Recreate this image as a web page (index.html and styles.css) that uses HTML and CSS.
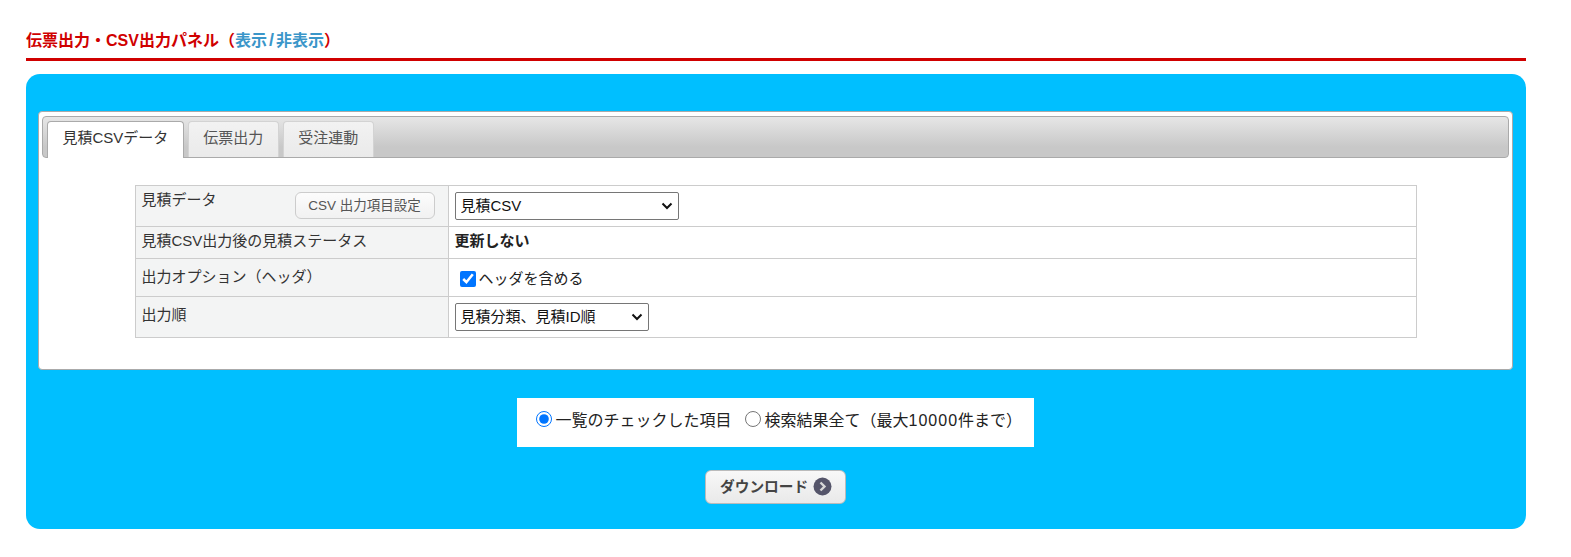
FILE: index.html
```html
<!DOCTYPE html>
<html lang="ja">
<head>
<meta charset="utf-8">
<title>伝票出力・CSV出力パネル</title>
<link rel="stylesheet" href="styles.css">
</head>
<body>
<main class="page">
  <h2 class="title">伝票出力・CSV出力パネル（<a class="toggle" href="#">表示<span class="slash">/</span>非表示</a>）</h2>
  <section class="panel">
    <div class="tabs">
      <ul class="tabbar">
        <li class="tab active">見積CSVデータ</li>
        <li class="tab">伝票出力</li>
        <li class="tab">受注連動</li>
      </ul>
      <div class="tabbody">
        <table class="form">
          <tr class="r1">
            <th><div class="thflex"><span>見積データ</span><button class="setbtn" type="button">CSV 出力項目設定</button></div></th>
            <td><select class="sel sel-a"><option>見積CSV</option></select></td>
          </tr>
          <tr class="r2">
            <th>見積CSV出力後の見積ステータス</th>
            <td><strong>更新しない</strong></td>
          </tr>
          <tr class="r3">
            <th>出力オプション（ヘッダ）</th>
            <td><label class="chk"><input type="checkbox" checked>ヘッダを含める</label></td>
          </tr>
          <tr class="r4">
            <th>出力順</th>
            <td><select class="sel sel-b"><option>見積分類、見積ID順</option></select></td>
          </tr>
        </table>
      </div>
    </div>
    <div class="scope">
      <label class="rad"><input type="radio" name="scope" checked>一覧のチェックした項目</label>
      <label class="rad"><input type="radio" name="scope"><span>検索結果全て（最大<span class="num">10000</span>件まで）</span></label>
    </div>
    <div class="actions">
      <button class="dl" type="button">ダウンロード<svg class="dl-icon" width="19" height="19" viewBox="0 0 19 19"><circle cx="9.5" cy="9.5" r="9" fill="#55556a"/><path d="M7.5 5.5l4 4-4 4" fill="none" stroke="#d8d8d8" stroke-width="2.4"/></svg></button>
    </div>
  </section>
</main>
</body>
</html>
```
FILE: styles.css
```css
* { box-sizing: border-box; }
html, body { margin: 0; padding: 0; background: #fff; }
body {
  font-family: "Liberation Sans", "Noto Sans CJK JP", sans-serif;
  font-size: 15px;
  color: #333;
}
.page { width: 1500px; margin-left: 26px; padding-top: 30px; }
.title {
  margin: 0;
  height: 31px;
  padding-top: 1px;
  font-size: 16px;
  line-height: 20px;
  font-weight: bold;
  color: #d00000;
  border-bottom: 3px solid #d00000;
}
.toggle { color: #3a96c9; text-decoration: none; }
.slash { padding: 0 2px; font-size: 18px; line-height: 16px; }
.panel {
  margin-top: 13px;
  height: 455px;
  background: #00bfff;
  border-radius: 14px;
  padding: 37px 13px 0 12px;
}
.tabs {
  height: 259px;
  background: #fff;
  border: 1px solid #aaa;
  border-radius: 4px;
  padding: 4px 3px 0;
}
.tabbar {
  list-style: none;
  margin: 0;
  padding: 4px 0 0 4px;
  height: 42px;
  display: flex;
  gap: 4px;
  align-items: flex-end;
  border: 1px solid #aaa;
  border-radius: 4px;
  background: linear-gradient(#e6e6e6, #c8c8c8 75%);
}
.tab {
  height: 36px;
  padding: 0 14.5px;
  line-height: 32px;
  color: #555;
  background: linear-gradient(#f2f2f2, #eaeaea);
  border: 1px solid #d3d3d3;
  border-bottom: 0;
  border-radius: 4px 4px 0 0;
}
.tab.active {
  height: 37px;
  margin-bottom: -1px;
  background: #fff;
  color: #333;
  border-color: #aaa;
}
.tabbody { padding: 27px 0 0; display: flex; justify-content: center; }
.form {
  width: 1282px;
  border-collapse: collapse;
  table-layout: fixed;
}
.form th, .form td {
  border: 1px solid #ccc;
  padding: 4px 6px;
  vertical-align: top;
  text-align: left;
  font-weight: normal;
  line-height: 20px;
}
.form th { width: 313px; background: #f3f4f4; }
.form td { color: #222; }
.form td strong { font-weight: bold; }
.form .r1 td { padding-top: 6px; }
.form .r2 th, .form .r2 td { padding-top: 4px; }
.form .r3 th { padding-top: 8px; }
.form .r4 th { padding-top: 8px; }
.form .r4 td { padding-top: 6px; }
.r1 { height: 41px; }
.r2 { height: 32px; }
.r3 { height: 38px; }
.r4 { height: 41px; }
.thflex { display: flex; justify-content: space-between; align-items: flex-start; padding-right: 7px; }
.setbtn {
  width: 140px;
  height: 27px;
  margin-top: 2px;
  padding: 0;
  font: inherit;
  font-size: 13.5px;
  color: #555;
  background: linear-gradient(#fcfcfc, #f1f1f1);
  border: 1px solid #ccc;
  border-radius: 6px;
}
.sel {
  display: block;
  height: 28px;
  font: inherit;
  color: #111;
  background: #fff url("data:image/svg+xml,%3Csvg xmlns='http://www.w3.org/2000/svg' width='12' height='8'%3E%3Cpath d='M1.5 1.5L6 6l4.5-4.5' fill='none' stroke='%23111' stroke-width='2'/%3E%3C/svg%3E") no-repeat right 5px center;
  border: 1px solid #767676;
  border-radius: 2px;
  padding: 0 20px 0 5px;
  appearance: none;
}
.sel-a { width: 224px; }
.sel-b { width: 194px; }
.chk { display: flex; align-items: center; padding: 6px 0 0 5px; color: #222; }
.chk input { width: 16px; height: 16px; margin: -1px 3px 0 0; accent-color: #0075ff; }
.scope {
  width: 517px;
  height: 49px;
  margin: 28px 0 0 478.5px;
  background: #fff;
  padding: 0 0 8px 19px;
  display: flex;
  align-items: center;
  gap: 13px;
  color: #222;
  font-size: 16px;
}
.num { letter-spacing: 1px; }
.rad { display: flex; align-items: center; }
.rad input { width: 16px; height: 16px; margin: 0 4px 0 0; }
.actions { display: flex; justify-content: center; margin-top: 23px; }
.dl {
  display: flex;
  align-items: center;
  gap: 5px;
  width: 141px;
  height: 34px;
  padding: 0 0 4px 14px;
  font: inherit;
  font-size: 14.7px;
  font-weight: bold;
  color: #444;
  background: linear-gradient(#f8f8f8, #e9e9e9);
  border: 1px solid #bbb;
  border-radius: 6px;
}
.dl-icon { margin-top: 2px; }
```
